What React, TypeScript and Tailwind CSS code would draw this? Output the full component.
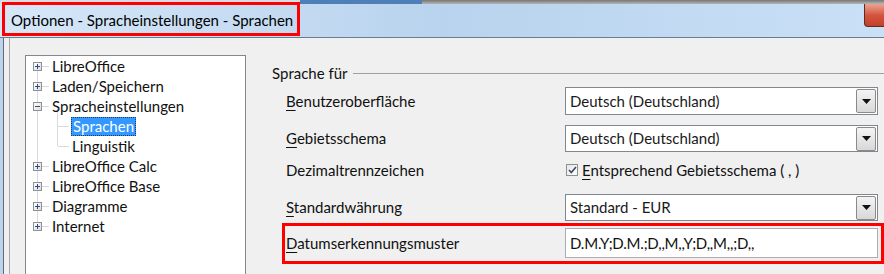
import React from "react";

const treeItems = [
  { label: "LibreOffice", level: 0, box: "plus" },
  { label: "Laden/Speichern", level: 0, box: "plus" },
  { label: "Spracheinstellungen", level: 0, box: "minus" },
  { label: "Sprachen", level: 1, selected: true },
  { label: "Linguistik", level: 1 },
  { label: "LibreOffice Calc", level: 0, box: "plus" },
  { label: "LibreOffice Base", level: 0, box: "plus" },
  { label: "Diagramme", level: 0, box: "plus" },
  { label: "Internet", level: 0, box: "plus" },
];

function Expander({ kind }: { kind: string }) {
  return (
    <div className="w-[9px] h-[9px] border border-[#919191] bg-gradient-to-br from-white to-[#dcdcdc] flex items-center justify-center relative">
      <div className="w-[5px] h-px bg-[#2c4f86]" />
      {kind === "plus" && <div className="absolute w-px h-[5px] bg-[#2c4f86]" />}
    </div>
  );
}

function Mn({ c }: { c: string }) {
  return <span className="underline underline-offset-[3px] decoration-1">{c}</span>;
}

function DropButton() {
  return (
    <div className="w-[20px] h-[24px] mr-[1px] border border-[#8a8a8a] rounded-[2px] bg-gradient-to-b from-[#f4f4f4] to-[#d8d8d8] flex items-center justify-center">
      <svg width="9" height="5" viewBox="0 0 9 5">
        <path d="M0 0h9L4.5 5z" fill="#111" />
      </svg>
    </div>
  );
}

function Dropdown({ value, h }: { value: string; h: string }) {
  return (
    <div className={`w-[313px] ${h} bg-white border border-[#82878f] flex items-center justify-between pl-[4px]`}>
      <span className="text-[#1a1a1a]">{value}</span>
      <DropButton />
    </div>
  );
}

export default function App() {
  return (
    <div className="w-[884px] h-[274px] bg-[#f0f0f0] overflow-hidden relative font-['Lato',sans-serif] text-[15px] text-[#111]">
      {/* strip of the window behind */}
      <div className="h-[4px] flex">
        <div className="w-[300px] bg-[#d7dde4]" />
        <div className="w-[122px] bg-[#4f7fb8]" />
        <div className="flex-1 bg-gradient-to-b from-[#777] to-[#b5b5b5]" />
      </div>

      {/* title bar */}
      <div className="h-[34px] bg-gradient-to-r from-[#d6e7f8] via-[#b9d3ee] to-[#c9e0f6] border-b border-[#6c7c90] flex items-center justify-between">
        <span className="pl-[11px] text-[15px] text-black">Optionen - Spracheinstellungen - Sprachen</span>
        <div className="self-start w-[20px] h-[23px] bg-gradient-to-b from-[#e9a394] via-[#d5553f] to-[#c0402a] border-l border-b border-[#5b2b24] rounded-bl-[4px]" />
      </div>

      {/* body */}
      <div className="flex h-[236px]">
        {/* window frame */}
        <div className="w-[3px] bg-[#bcd4ec]" />
        <div className="w-px bg-[#5f6b78]" />
        <div className="w-[5px]" />
        <div className="w-px bg-[#a9a9a9]" />

        {/* tree */}
        <div className="ml-[15px] mt-[17px] w-[221px] h-[240px] bg-white border border-[#828790] relative">
          <svg className="absolute left-0 top-0" width="219" height="200">
            <g stroke="#dadada" strokeWidth="1" shapeRendering="crispEdges">
              <line x1="11.5" y1="10" x2="11.5" y2="170" />
              {[0, 1, 2, 5, 6, 7, 8].map((i) => (
                <line key={i} x1="16" y1={10.5 + i * 20} x2="23" y2={10.5 + i * 20} />
              ))}
              <line x1="31.5" y1="51" x2="31.5" y2="90" />
              <line x1="31.5" y1="70.5" x2="43" y2="70.5" />
              <line x1="31.5" y1="90.5" x2="43" y2="90.5" />
            </g>
          </svg>
          <div className="flex flex-col relative">
            {treeItems.map((it) => (
              <div key={it.label} className="h-[20px] flex items-center">
                {it.level === 0 ? (
                  <>
                    <div className="w-[7px]" />
                    <Expander kind={it.box as string} />
                    <span className="ml-[10px] leading-[19px]">{it.label}</span>
                  </>
                ) : (
                  <span
                    className={
                      it.selected
                        ? "ml-[45px] px-px h-[19px] leading-[16px] bg-[#3399ff] text-white border border-dotted border-[#1b3a66]"
                        : "ml-[46px] leading-[19px]"
                    }
                  >
                    {it.label}
                  </span>
                )}
              </div>
            ))}
          </div>
        </div>

        {/* options */}
        <div className="ml-[26px] pt-[25px] flex-1 flex flex-col">
          <div className="h-[20px] flex items-center">
            <span className="leading-[20px]">Sprache für</span>
            <div className="flex-1 h-px bg-[#a0a0a0] ml-[5px]" />
          </div>

          <div className="pl-[14px] flex flex-col">
            <div className="mt-[4px] flex items-center">
              <div className="w-[279px]"><Mn c="B" />enutzeroberfläche</div>
              <Dropdown value="Deutsch (Deutschland)" h="h-[28px]" />
            </div>
            <div className="mt-[10px] flex items-center">
              <div className="w-[279px]"><Mn c="G" />ebietsschema</div>
              <Dropdown value="Deutsch (Deutschland)" h="h-[27px]" />
            </div>
            <div className="mt-[5px] h-[26px] flex items-center">
              <div className="w-[279px]">Dezimaltrennzeichen</div>
              <div className="flex items-center pl-px">
                <div className="w-[12px] h-[12px] border border-[#8e8f8f] bg-gradient-to-br from-[#e6e6e6] to-white flex items-center justify-center">
                  <svg width="9" height="8" viewBox="0 0 9 8">
                    <path d="M1 4l2.3 2.5L8 1" fill="none" stroke="#3b4a66" strokeWidth="1.6" />
                  </svg>
                </div>
                <span className="ml-[4px]"><Mn c="E" />ntsprechend Gebietsschema ( , )</span>
              </div>
            </div>
            <div className="mt-[11px] flex items-center">
              <div className="w-[279px]"><Mn c="S" />tandardwährung</div>
              <Dropdown value="Standard - EUR" h="h-[27px]" />
            </div>
            <div className="mt-[7px] flex items-center">
              <div className="w-[279px]"><Mn c="D" />atumserkennungsmuster</div>
              <div className="w-[313px] h-[30px] bg-white border border-[#abadb3] flex items-center pl-[4px] tracking-[-0.2px]">
                D.M.Y;D.M.;D,,M,,Y;D,,M,,;D,,
              </div>
            </div>
          </div>
        </div>
      </div>

      {/* red annotation boxes */}
      <div className="absolute left-[2px] top-[2px] w-[298px] h-[34px] border-[3px] border-[#ff0000]" />
      <div className="absolute left-[282px] top-[223px] w-[602px] h-[41px] border-[3px] border-[#ff0000]" />
    </div>
  );
}
